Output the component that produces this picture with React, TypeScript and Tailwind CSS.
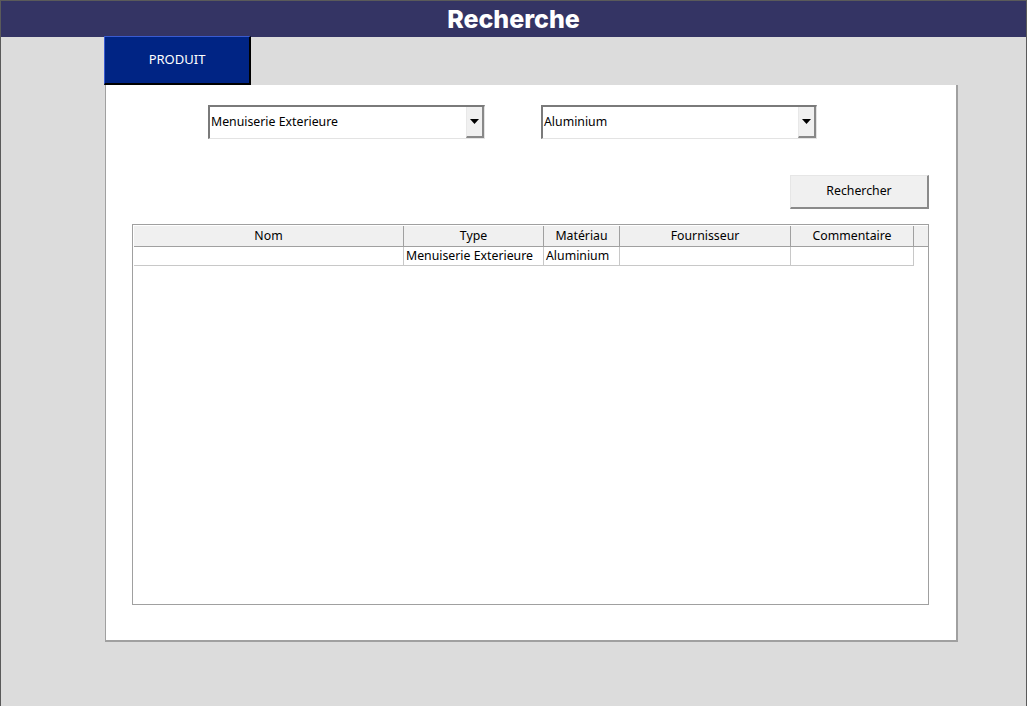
import React from "react";

const font = { fontFamily: '"Noto Sans", "Open Sans", sans-serif' };

function Combo({ value, width }: { value: string; width: string }) {
  return (
    <div className={`flex h-[34px] ${width} border-l-2 border-t-2 border-[#7a7a7a] border-b border-r border-b-[#e3e3e3] border-r-[#e3e3e3] bg-white`}>
      <div className="flex flex-1 items-center pl-[1px] text-[12.3px] text-black">{value}</div>
      <div className="flex w-[18px] items-center justify-center border-l border-[#e8e8e8] border-r-2 border-b-2 border-r-[#888888] border-b-[#888888] bg-[#f0f0f0]">
        <svg width="9" height="5" viewBox="0 0 9 5">
          <polygon points="0,0 9,0 4.5,5" fill="#000" />
        </svg>
      </div>
    </div>
  );
}

export default function App() {
  const cols = [
    { name: "Nom", w: "w-[270px]", val: "" },
    { name: "Type", w: "w-[140px]", val: "Menuiserie Exterieure" },
    { name: "Matériau", w: "w-[76px]", val: "Aluminium" },
    { name: "Fournisseur", w: "w-[171px]", val: "" },
    { name: "Commentaire", w: "w-[123px]", val: "" },
  ];
  return (
    <div style={font} className="w-[1027px] h-[706px] overflow-hidden bg-[#dcdcdc] border-l border-t border-r border-[#5a5a5a]">
      <div className="flex h-[36px] items-center justify-center bg-[#343464]">
        <span style={{ fontFamily: 'Inter, "Noto Sans", sans-serif' }} className="text-[25px] font-extrabold leading-none text-white">
          Recherche
        </span>
      </div>
      <div className="ml-[103px] -mt-[1px] flex h-[49px] w-[147px] items-center justify-center border-l border-t border-[#3a5ad0] border-r-2 border-b-2 border-r-black border-b-black bg-[#002484] text-[13px] text-white">
        PRODUIT
      </div>
      <div className="ml-[104px] h-[557px] w-[853px] border border-[#a0a0a0] border-r-2 border-b-2 border-t-0 bg-white">
        <div className="flex pt-[20px] pl-[102px] gap-[56px]">
          <Combo value="Menuiserie Exterieure" width="w-[277px]" />
          <Combo value="Aluminium" width="w-[276px]" />
        </div>
        <div className="flex justify-end pr-[27px] pt-[36px]">
          <button className="flex h-[34px] w-[139px] items-center justify-center border-l border-t border-[#e6e6e6] border-r-2 border-b-2 border-r-[#8a8a8a] border-b-[#8a8a8a] bg-[#f0f0f0] text-[12.3px] text-black">
            Rechercher
          </button>
        </div>
        <div className="ml-[26px] mt-[15px] h-[381px] w-[797px] border border-[#a0a0a0] pl-[1px] pt-[1px] text-[12.3px] text-black">
          <div className="flex h-[21px] border-b border-[#a0a0a0] bg-[#f0f0f0]">
            {cols.map((c) => (
              <div key={c.name} className={`${c.w} flex items-center justify-center border-r border-[#a0a0a0]`}>
                {c.name}
              </div>
            ))}
            <div className="flex-1" />
          </div>
          <div className="flex h-[19px]">
            {cols.map((c) => (
              <div
                key={c.name}
                className={`${c.w} flex items-center overflow-hidden whitespace-nowrap border-r border-b border-[#c8c8c8] pl-[2px]`}
              >
                {c.val}
              </div>
            ))}
          </div>
        </div>
      </div>
    </div>
  );
}
